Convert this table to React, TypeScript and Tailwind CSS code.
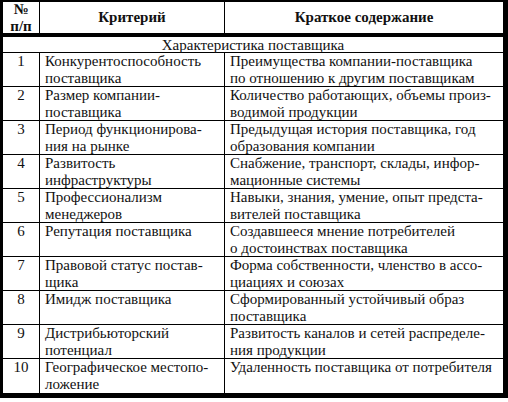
const rows: [string, string[], string[]][] = [
  ["1", ["Конкурентоспособность", "поставщика"], ["Преимущества компании-поставщика", "по отношению к другим поставщикам"]],
  ["2", ["Размер компании-", "поставщика"], ["Количество работающих, объемы произ-", "водимой продукции"]],
  ["3", ["Период функционирова-", "ния на рынке"], ["Предыдущая история поставщика, год", "образования компании"]],
  ["4", ["Развитость", "инфраструктуры"], ["Снабжение, транспорт, склады, инфор-", "мационные системы"]],
  ["5", ["Профессионализм", "менеджеров"], ["Навыки, знания, умение, опыт предста-", "вителей поставщика"]],
  ["6", ["Репутация поставщика"], ["Создавшееся мнение потребителей", "о достоинствах поставщика"]],
  ["7", ["Правовой статус постав-", "щика"], ["Форма собственности, членство в ассо-", "циациях и союзах"]],
  ["8", ["Имидж поставщика"], ["Сформированный устойчивый образ", "поставщика"]],
  ["9", ["Дистрибьюторский", "потенциал"], ["Развитость каналов и сетей распределе-", "ния продукции"]],
  ["10", ["Географическое местопо-", "ложение"], ["Удаленность поставщика от потребителя"]],
];

export default function App() {
  return (
    <div className="w-[508px] h-[402px] bg-white text-[#111] font-['Liberation_Serif',serif] text-[15px] leading-[17px]">
      <div className="border-l-[3px] border-t-2 border-r-[5px] border-b-[5px] border-black">
        <div className="flex h-[35px] border-b-4 border-black font-bold">
          <div className="w-[37px] flex flex-col items-center justify-center border-r border-black">
            <span>№</span>
            <span>п/п</span>
          </div>
          <div className="w-[185px] flex items-center justify-center border-r border-black">Критерий</div>
          <div className="flex-1 flex items-center justify-center">Краткое содержание</div>
        </div>
        <div className="h-[16px] border-b border-black text-center leading-[16px]">Характеристика поставщика</div>
        {rows.map(([n, a, b], i) => (
          <div key={n} className={`flex h-[34px] ${i < rows.length - 1 ? "border-b border-black" : ""}`}>
            <div className="w-[37px] text-center border-r border-black">{n}</div>
            <div className="w-[185px] pl-[5px] border-r border-black">
              {a.map((t) => (
                <div key={t}>{t}</div>
              ))}
            </div>
            <div className="flex-1 pl-[5px]">
              {b.map((t) => (
                <div key={t}>{t}</div>
              ))}
            </div>
          </div>
        ))}
      </div>
    </div>
  );
}
